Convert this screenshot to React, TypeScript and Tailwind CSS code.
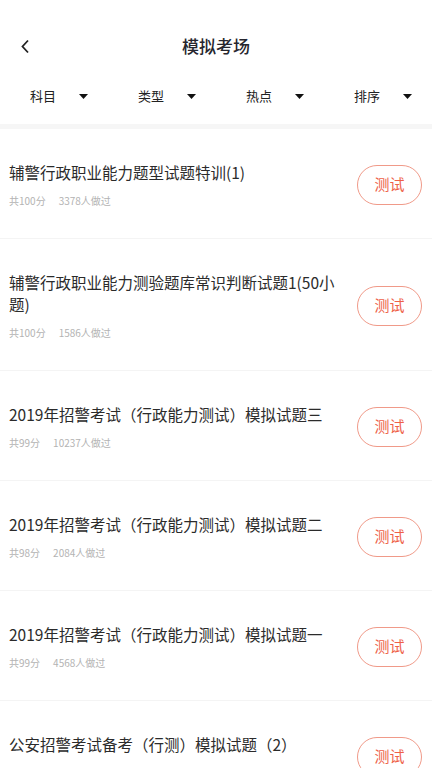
const exams = [
  { title: "辅警行政职业能力题型试题特训(1)", score: 100, count: 3378 },
  { title: "辅警行政职业能力测验题库常识判断试题1(50小题)", score: 100, count: 1586 },
  { title: "2019年招警考试（行政能力测试）模拟试题三", score: 99, count: 10237 },
  { title: "2019年招警考试（行政能力测试）模拟试题二", score: 98, count: 2084 },
  { title: "2019年招警考试（行政能力测试）模拟试题一", score: 99, count: 4568 },
  { title: "公安招警考试备考（行测）模拟试题（2）", score: 100, count: 1320 },
];

const filters = ["科目", "类型", "热点", "排序"];

function Caret() {
  return (
    <svg width="9" height="5" viewBox="0 0 9 5">
      <path d="M0 0H9L4.5 5Z" fill="#111" />
    </svg>
  );
}

export default function App() {
  return (
    <div
      className="w-[432px] h-[768px] overflow-hidden bg-white"
      style={{ fontFamily: '"Noto Sans CJK SC", Roboto, sans-serif' }}
    >
      <div className="mt-[22px] h-[48px] grid grid-cols-[1fr_auto_1fr] items-center">
        <div className="pl-[20px] flex items-center">
          <svg width="10" height="15" viewBox="0 0 10 15">
            <path d="M8 1.5L2.5 7.5L8 13.5" fill="none" stroke="#222" strokeWidth="1.8" />
          </svg>
        </div>
        <h1 className="text-[17px] font-medium text-[#26262e]">模拟考场</h1>
        <div />
      </div>

      <div className="mt-[2px] h-[48px] grid grid-cols-4 items-center">
        {filters.map((f) => (
          <div key={f} className="flex items-center pl-[30px] gap-[23px]">
            <span className="text-[13px] text-[#222]">{f}</span>
            <Caret />
          </div>
        ))}
      </div>
      <div className="mt-[4px] h-[5px] bg-[#f6f6f6]" />

      <div>
        {exams.map((e) => (
          <div
            key={e.title}
            className="flex items-center pl-[9px] pr-[10px] pt-[32px] pb-[30px] border-b border-[#f4f4f4]"
          >
            <div className="flex-1 mr-[6px]">
              <p className="text-[15.5px] leading-[22px] text-[#2b2b2b]">{e.title}</p>
              <p className="mt-[11px] text-[10px] leading-[14px] text-[#b3b3b3]">
                <span>共{e.score}分</span>
                <span className="ml-[13px]">{e.count}人做过</span>
              </p>
            </div>
            <button
              type="button"
              className="w-[65px] h-[40px] rounded-full border border-[#f09a89] text-[15px] text-[#ee6149] shrink-0"
            >
              测试
            </button>
          </div>
        ))}
      </div>
    </div>
  );
}
